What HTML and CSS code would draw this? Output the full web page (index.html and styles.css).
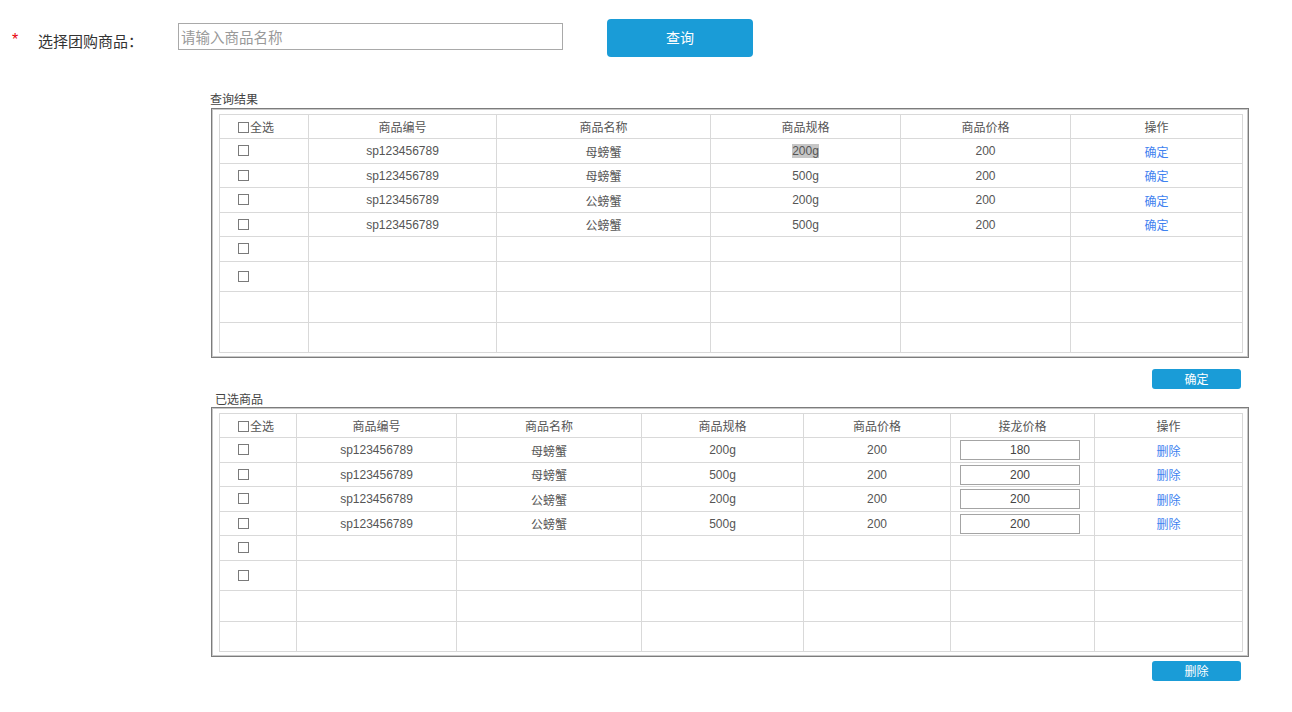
FILE: index.html
```html
<!DOCTYPE html>
<html lang="zh-CN">
<head>
    <meta charset="UTF-8">
    <meta name="viewport" content="width=device-width, initial-scale=1.0">
    <title>选择团购商品</title>
    <link rel="stylesheet" href="styles.css">
</head>
<body>

<!-- Search bar -->
<div class="search-row">
    <span class="required">*</span>
    <label class="search-label" for="keyword">选择团购商品：</label>
    <input id="keyword" class="search-input" type="text" placeholder="请输入商品名称">
    <button class="search-btn">查询</button>
</div>

<!-- Query result -->
<div class="section">
    <div class="section-title">查询结果</div>
    <div class="frame">
        <table class="grid">
            <colgroup>
                <col style="width: 89px">
                <col style="width: 188px">
                <col style="width: 214px">
                <col style="width: 190px">
                <col style="width: 170px">
                <col>
            </colgroup>
            <tr class="row-head">
                <th class="check-cell"><input type="checkbox" class="box">全选</th>
                <th>商品编号</th>
                <th>商品名称</th>
                <th>商品规格</th>
                <th>商品价格</th>
                <th>操作</th>
            </tr>
            <tr class="row-a">
                <td class="check-cell"><input type="checkbox" class="box"></td>
                <td>sp123456789</td>
                <td>母螃蟹</td>
                <td><span class="selected">200g</span></td>
                <td>200</td>
                <td><a href="#" class="link">确定</a></td>
            </tr>
            <tr class="row-b">
                <td class="check-cell"><input type="checkbox" class="box"></td>
                <td>sp123456789</td>
                <td>母螃蟹</td>
                <td>500g</td>
                <td>200</td>
                <td><a href="#" class="link">确定</a></td>
            </tr>
            <tr class="row-a">
                <td class="check-cell"><input type="checkbox" class="box"></td>
                <td>sp123456789</td>
                <td>公螃蟹</td>
                <td>200g</td>
                <td>200</td>
                <td><a href="#" class="link">确定</a></td>
            </tr>
            <tr class="row-b">
                <td class="check-cell"><input type="checkbox" class="box"></td>
                <td>sp123456789</td>
                <td>公螃蟹</td>
                <td>500g</td>
                <td>200</td>
                <td><a href="#" class="link">确定</a></td>
            </tr>
            <tr class="row-a">
                <td class="check-cell"><input type="checkbox" class="box"></td>
                <td></td><td></td><td></td><td></td><td></td>
            </tr>
            <tr class="row-c">
                <td class="check-cell"><input type="checkbox" class="box"></td>
                <td></td><td></td><td></td><td></td><td></td>
            </tr>
            <tr class="row-d">
                <td></td><td></td><td></td><td></td><td></td><td></td>
            </tr>
            <tr class="row-c">
                <td></td><td></td><td></td><td></td><td></td><td></td>
            </tr>
        </table>
    </div>
    <div class="actions">
        <button class="small-btn">确定</button>
    </div>
</div>

<!-- Selected goods -->
<div class="section">
    <div class="section-title selected-title">已选商品</div>
    <div class="frame">
        <table class="grid">
            <colgroup>
                <col style="width: 77px">
                <col style="width: 160px">
                <col style="width: 185px">
                <col style="width: 162px">
                <col style="width: 147px">
                <col style="width: 144px">
                <col>
            </colgroup>
            <tr class="row-head">
                <th class="check-cell"><input type="checkbox" class="box">全选</th>
                <th>商品编号</th>
                <th>商品名称</th>
                <th>商品规格</th>
                <th>商品价格</th>
                <th>接龙价格</th>
                <th>操作</th>
            </tr>
            <tr class="row-a">
                <td class="check-cell"><input type="checkbox" class="box"></td>
                <td>sp123456789</td>
                <td>母螃蟹</td>
                <td>200g</td>
                <td>200</td>
                <td><input type="text" class="price-input" value="180"></td>
                <td><a href="#" class="link">删除</a></td>
            </tr>
            <tr class="row-b">
                <td class="check-cell"><input type="checkbox" class="box"></td>
                <td>sp123456789</td>
                <td>母螃蟹</td>
                <td>500g</td>
                <td>200</td>
                <td><input type="text" class="price-input" value="200"></td>
                <td><a href="#" class="link">删除</a></td>
            </tr>
            <tr class="row-a">
                <td class="check-cell"><input type="checkbox" class="box"></td>
                <td>sp123456789</td>
                <td>公螃蟹</td>
                <td>200g</td>
                <td>200</td>
                <td><input type="text" class="price-input" value="200"></td>
                <td><a href="#" class="link">删除</a></td>
            </tr>
            <tr class="row-b">
                <td class="check-cell"><input type="checkbox" class="box"></td>
                <td>sp123456789</td>
                <td>公螃蟹</td>
                <td>500g</td>
                <td>200</td>
                <td><input type="text" class="price-input" value="200"></td>
                <td><a href="#" class="link">删除</a></td>
            </tr>
            <tr class="row-a">
                <td class="check-cell"><input type="checkbox" class="box"></td>
                <td></td><td></td><td></td><td></td><td></td><td></td>
            </tr>
            <tr class="row-c">
                <td class="check-cell"><input type="checkbox" class="box"></td>
                <td></td><td></td><td></td><td></td><td></td><td></td>
            </tr>
            <tr class="row-d">
                <td></td><td></td><td></td><td></td><td></td><td></td><td></td>
            </tr>
            <tr class="row-c">
                <td></td><td></td><td></td><td></td><td></td><td></td><td></td>
            </tr>
        </table>
    </div>
    <div class="actions actions-bottom">
        <button class="small-btn">删除</button>
    </div>
</div>

</body>
</html>
```

FILE: styles.css
```css
/* General */
body {
    margin: 0;
    background-color: #fff;
    color: #333;
    font-family: "Liberation Sans", "Noto Sans CJK SC", sans-serif;
}

/* Search bar */
.search-row {
    display: flex;
    align-items: flex-start;
    padding: 19px 0 0 12px;
}

.required {
    width: 26px;
    margin-top: 13px;
    color: #e8000b;
    font-size: 16px;
    line-height: 16px;
}

.search-label {
    width: 140px;
    margin-top: 12px;
    font-family: "Noto Sans CJK SC", sans-serif;
    font-size: 15px;
    line-height: 20px;
    color: #333;
}

.search-input {
    box-sizing: border-box;
    width: 385px;
    height: 27px;
    margin-top: 4px;
    padding: 0 2px;
    border: 1px solid #a9a9a9;
    font-family: "Noto Sans CJK SC", sans-serif;
    font-size: 14.5px;
    color: #333;
    outline: none;
}

.search-input::placeholder {
    color: #999;
}

.search-btn {
    width: 146px;
    height: 38px;
    margin-left: 44px;
    padding: 0 0 2px;
    border: none;
    border-radius: 4px;
    background-color: #1a9cd7;
    color: #fff;
    font-family: "Noto Sans CJK SC", sans-serif;
    font-size: 14px;
    cursor: pointer;
}

/* Sections */
.section {
    width: 1038px;
    margin-left: 211px;
}

.section-title {
    margin-top: 34px;
    margin-left: -1px;
    margin-bottom: 1px;
    font-family: "Noto Sans CJK SC", sans-serif;
    font-size: 12px;
    line-height: 16px;
    color: #444;
}

.selected-title {
    margin-top: 2px;
    margin-left: 4px;
    margin-bottom: 0;
}

.frame {
    box-sizing: border-box;
    padding: 5px 5px 4px 7px;
    border: 1px solid #7c7c7c;
    box-shadow: inset 0 0 0 1px #c8c8c8;
}

/* Tables */
.grid {
    width: 100%;
    border-collapse: collapse;
    table-layout: fixed;
    font-size: 12px;
    color: #555;
}

.grid th,
.grid td {
    padding: 0;
    border: 1px solid #d9d9d9;
    text-align: center;
    vertical-align: middle;
    font-weight: normal;
}

.row-head { height: 24px; }
.row-a { height: 25px; }
.row-b { height: 24px; }
.row-c { height: 30px; }
.row-d { height: 31px; }

.grid .check-cell {
    padding-left: 18px;
    text-align: left;
}

.box {
    appearance: none;
    -webkit-appearance: none;
    box-sizing: border-box;
    width: 11px;
    height: 11px;
    margin: 0 1px 0 0;
    border: 1px solid #7a7a7a;
    background-color: #fff;
    vertical-align: -1px;
}

.selected {
    background-color: #c6c6c6;
}

.link {
    color: #3f82f0;
    text-decoration: none;
}

.price-input {
    box-sizing: border-box;
    display: block;
    width: 120px;
    height: 20px;
    margin: 0 auto 0 9px;
    padding: 0;
    border: 1px solid #a4a4a4;
    text-align: center;
    font-family: "Liberation Sans", sans-serif;
    font-size: 12px;
    color: #444;
}

/* Buttons under the tables */
.actions {
    display: flex;
    justify-content: flex-end;
    padding-right: 8px;
    margin-top: 11px;
}

.actions-bottom {
    margin-top: 4px;
}

.small-btn {
    width: 89px;
    height: 20px;
    border: none;
    border-radius: 3px;
    background-color: #1a9cd7;
    color: #fff;
    font-family: "Noto Sans CJK SC", sans-serif;
    font-size: 12px;
    line-height: 20px;
    padding: 0;
    cursor: pointer;
}
```
